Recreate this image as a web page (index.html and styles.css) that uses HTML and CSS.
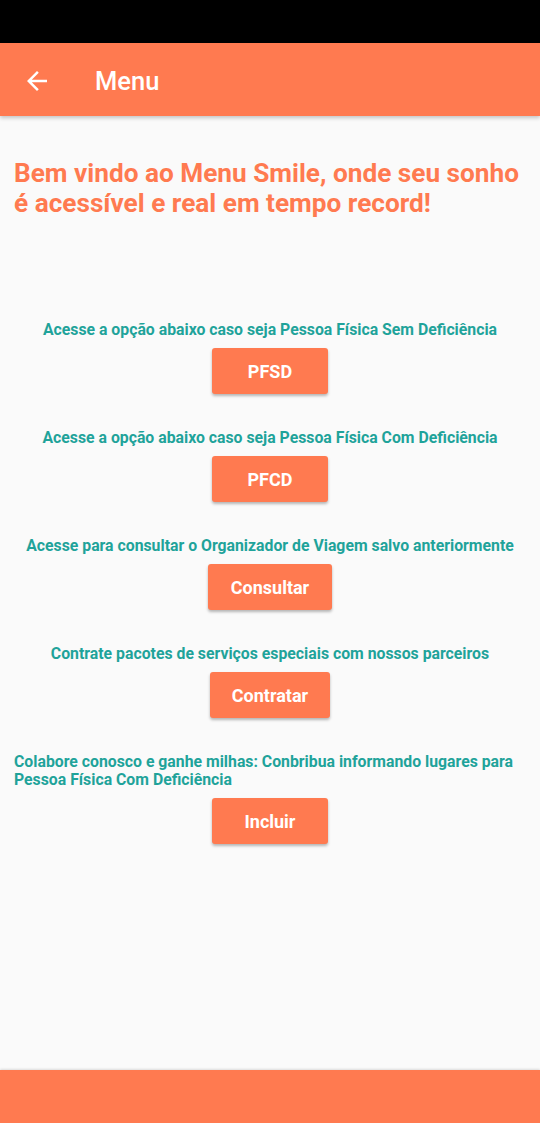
FILE: index.html
```html
<!DOCTYPE html>
<html>
<head>
<meta charset="utf-8">
<link rel="stylesheet" href="styles.css">
</head>
<body>
<div class="screen">
  <div class="statusbar"></div>
  <header class="appbar">
    <svg class="back" width="30" height="30" viewBox="0 0 24 24"><path d="M20 11H7.83l5.59-5.59L12 4l-8 8 8 8 1.41-1.41L7.83 13H20v-2z" fill="#fff"/></svg>
    <span class="appbar-title">Menu</span>
  </header>
  <main class="content">
    <h1 class="welcome">Bem vindo ao Menu Smile, onde seu sonho é acessível e real em tempo record!</h1>
    <section class="options">
      <div class="option">
        <p class="label">Acesse a opção abaixo caso seja Pessoa Física Sem Deficiência</p>
        <button class="btn w116">PFSD</button>
      </div>
      <div class="option">
        <p class="label">Acesse a opção abaixo caso seja Pessoa Física Com Deficiência</p>
        <button class="btn w116">PFCD</button>
      </div>
      <div class="option">
        <p class="label">Acesse para consultar o Organizador de Viagem salvo anteriormente</p>
        <button class="btn w124">Consultar</button>
      </div>
      <div class="option">
        <p class="label">Contrate pacotes de serviços especiais com nossos parceiros</p>
        <button class="btn w120">Contratar</button>
      </div>
      <div class="option">
        <p class="label left">Colabore conosco e ganhe milhas: Conbribua informando lugares para Pessoa Física Com Deficiência</p>
        <button class="btn w116">Incluir</button>
      </div>
    </section>
  </main>
  <footer class="bottombar"></footer>
</div>
</body>
</html>
```
FILE: styles.css
```css
* { box-sizing: border-box; }
html, body { margin: 0; padding: 0; }
body {
  font-family: Roboto, "Noto Sans", sans-serif;
  background: #fafafa;
}
.screen {
  width: 540px;
  height: 1123px;
  display: flex;
  flex-direction: column;
  overflow: hidden;
}
.statusbar {
  height: 43px;
  background: #000;
  flex: none;
}
.appbar {
  height: 73px;
  flex: none;
  background: #ff7a50;
  display: flex;
  align-items: center;
  padding-left: 22px;
  box-shadow: 0 2px 4px rgba(0,0,0,0.22);
  position: relative;
  z-index: 1;
}
.back { display: block; margin-top: 2px; }
.appbar-title {
  color: #fff;
  font-size: 25.5px;
  font-weight: 500;
  margin-left: 43px;
  margin-top: 2px;
}
.content {
  flex: 1;
  padding: 42px 14px 0 14px;
}
.welcome {
  margin: 0;
  color: #ff7a50;
  font-size: 26.2px;
  font-weight: 700;
  line-height: 30px;
}
.options {
  margin-top: 103px;
  display: flex;
  flex-direction: column;
  gap: 35px;
}
.option {
  display: flex;
  flex-direction: column;
  align-items: center;
  gap: 9px;
}
.label {
  margin: 0;
  color: #1fa39a;
  font-size: 15.8px;
  font-weight: 700;
  line-height: 18px;
  text-align: center;
}
.label.left {
  text-align: left;
  align-self: stretch;
}
.btn {
  height: 46px;
  border: none;
  border-radius: 3px;
  background: #ff7a50;
  color: #fff;
  font-family: Roboto, "Noto Sans", sans-serif;
  font-size: 18px;
  font-weight: 700;
  box-shadow: 0 2px 3px rgba(0,0,0,0.28);
  padding: 0;
}
.w116 { width: 116px; }
.w120 { width: 120px; }
.w124 { width: 124px; }
.bottombar {
  height: 53px;
  flex: none;
  background: #ff7a50;
  box-shadow: 0 -1px 2px rgba(0,0,0,0.12);
}
```
